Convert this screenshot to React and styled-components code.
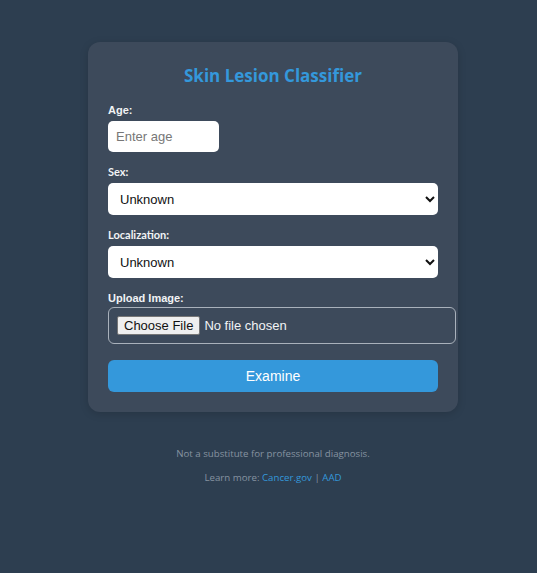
import React from 'react'
import styled, { createGlobalStyle } from 'styled-components'

const GlobalStyle = createGlobalStyle`
  html, body {
    margin: 0;
    padding: 0;
    background: #2d3e50;
  }
  body {
    font-family: "Liberation Sans", Arial, sans-serif;
  }
`

const Pagina = styled.main`
  min-height: 573px;
  padding: 42px 0 0 9px;
  display: flex;
  flex-direction: column;
  align-items: center;
  box-sizing: border-box;
`

const Tarjeta = styled.form`
  width: 330px;
  padding: 22px 20px 20px;
  background: #3d4a5b;
  border-radius: 12px;
  box-shadow: 0 2px 8px rgba(0, 0, 0, 0.15);
`

const Titulo = styled.h2`
  margin: 0 0 15px;
  text-align: center;
  font-family: "Open Sans", "Noto Sans", sans-serif;
  font-size: 17px;
  line-height: 24px;
  font-weight: 700;
  color: #3498db;
`

const Grupo = styled.div`
  display: flex;
  flex-direction: column;
  align-items: flex-start;
  gap: ${p => p.$gap ?? 4}px;
  margin-bottom: 13px;
`

const Etiqueta = styled.label`
  font-family: ${p => (p.$lato ? '"Lato", sans-serif' : '"Liberation Sans", Arial, sans-serif')};
  font-size: 11px;
  line-height: 14px;
  font-weight: 700;
  color: #f1f3f5;
`

const CampoEdad = styled.input`
  width: 111px;
  height: 31px;
  box-sizing: border-box;
  padding: 0 8px;
  border: none;
  border-radius: 5px;
  background: #fff;
  font-family: "Liberation Sans", Arial, sans-serif;
  font-size: 13px;
  color: #222;
  &::placeholder {
    color: #777;
  }
`

const Selector = styled.select`
  width: 330px;
  height: 32px;
  box-sizing: border-box;
  padding: 0 8px;
  border: none;
  border-radius: 5px;
  background: #fff;
  font-family: "Liberation Sans", Arial, sans-serif;
  font-size: 13px;
  color: #111;
`

const CajaArchivo = styled.div`
  width: 330px;
  padding: 8px;
  border: 1px solid #a9b1bb;
  border-radius: 6px;
  display: flex;
  align-items: center;
  gap: 4px;
  font-family: "Liberation Sans", Arial, sans-serif;
  font-size: 13px;
  color: #f1f3f5;
`

const BotonArchivo = styled.span`
  padding: 1px 6px;
  background: #efefef;
  border: 1px solid #767676;
  border-radius: 2px;
  color: #111;
  font-size: 13px;
  line-height: 15px;
`

const Boton = styled.button`
  width: 330px;
  height: 32px;
  margin-top: 3px;
  border: none;
  border-radius: 6px;
  background: #3498db;
  color: #fff;
  font-family: "Liberation Sans", Arial, sans-serif;
  font-size: 14px;
  cursor: pointer;
`

const Pie = styled.footer`
  margin-top: 30px;
  text-align: center;
  font-family: "Open Sans", "Noto Sans", sans-serif;
  font-size: 9.7px;
  line-height: 24px;
  color: #8693a0;
`

const Enlace = styled.a`
  color: #3498db;
  text-decoration: none;
`

function App() {
  return (
    <>
      <GlobalStyle />
      <Pagina>
        <Tarjeta onSubmit={e => e.preventDefault()}>
          <Titulo>Skin Lesion Classifier</Titulo>

          <Grupo>
            <Etiqueta>Age:</Etiqueta>
            <CampoEdad type="number" placeholder="Enter age" />
          </Grupo>

          <Grupo>
            <Etiqueta $lato>Sex:</Etiqueta>
            <Selector defaultValue="unknown">
              <option value="unknown">Unknown</option>
              <option value="male">Male</option>
              <option value="female">Female</option>
            </Selector>
          </Grupo>

          <Grupo>
            <Etiqueta $lato>Localization:</Etiqueta>
            <Selector defaultValue="unknown">
              <option value="unknown">Unknown</option>
              <option value="back">Back</option>
              <option value="face">Face</option>
            </Selector>
          </Grupo>

          <Grupo $gap={2}>
            <Etiqueta>Upload Image:</Etiqueta>
            <CajaArchivo>
              <BotonArchivo>Choose File</BotonArchivo>
              No file chosen
            </CajaArchivo>
          </Grupo>

          <Boton type="submit">Examine</Boton>
        </Tarjeta>

        <Pie>
          <div>Not a substitute for professional diagnosis.</div>
          <div>
            Learn more: <Enlace href="#">Cancer.gov</Enlace> | <Enlace href="#">AAD</Enlace>
          </div>
        </Pie>
      </Pagina>
    </>
  )
}

export default App
